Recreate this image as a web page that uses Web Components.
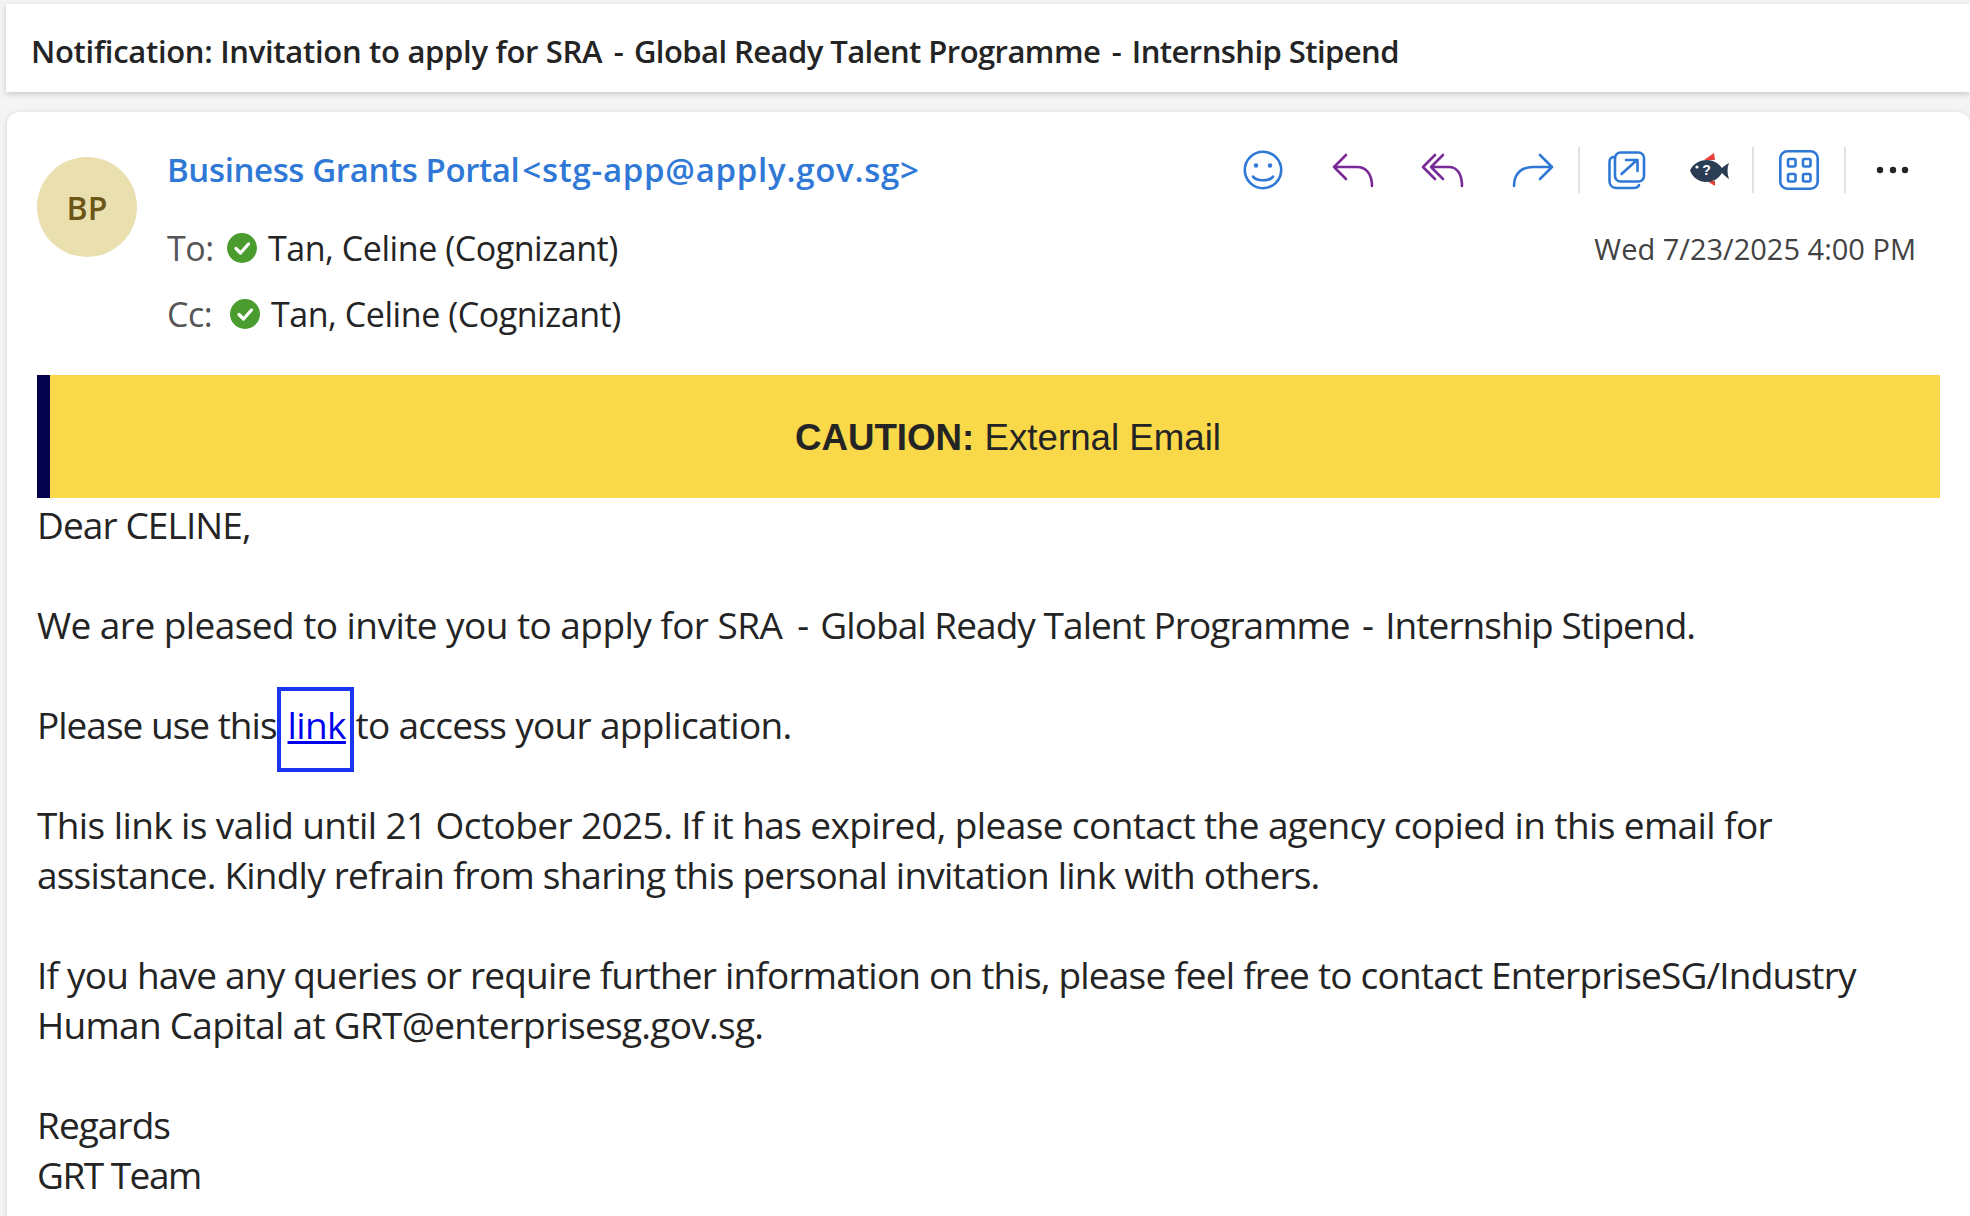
<!DOCTYPE html>
<html>
<head>
<meta charset="utf-8">
<title>Mail</title>
<style>
html, body { margin: 0; padding: 0; height: 100%; background: #f4f4f4; overflow: hidden; }
body { font-family: "Open Sans", "Noto Sans", sans-serif; color: #242424; }
/* Open Sans runs wider than the original face, so lines get their own tracking */
.dash { letter-spacing: .8px; padding-left: 2px; }
.dash-first { padding-left: 4.500px; }
.t-56 { letter-spacing: -.56px; }
.t-70 { letter-spacing: -.7px; }
.t-72 { letter-spacing: -.72px; }
.t-80 { letter-spacing: -.8px; }
.t-90 { letter-spacing: -.9px; }
.t-95 { letter-spacing: -.95px; }
.t-100 { letter-spacing: -1px; }
.t-150 { letter-spacing: -1.5px; }
.sub-dash { letter-spacing: 1px; padding-left: 2.500px; }
.sub-mid { letter-spacing: -.56px; }
</style>
</head>
<body>
<mail-page>
    <mail-subject>Notification: Invitation to apply for SRA<span class="sub-dash"> - </span><span class="sub-mid">Global Ready Talent Programme</span><span class="sub-dash"> - </span><span class="sub-mid">Internship Stipend</span></mail-subject>
    <mail-card>
        <mail-header
            slot="header"
            initials="BP"
            sender="Business Grants Portal"
            address="&lt;stg-app@apply.gov.sg&gt;"
            date="Wed 7/23/2025 4:00 PM">
            <mail-recipient label="To:" offset="60">Tan, Celine (Cognizant)</mail-recipient>
            <mail-recipient label="Cc:" offset="63">Tan, Celine (Cognizant)</mail-recipient>
        </mail-header>
        <caution-banner><b>CAUTION:</b> External Email</caution-banner>
        <mail-body>
            <p class="t-90">Dear CELINE,</p>
            <p><span class="t-56">We are pleased to invite you to apply for SRA</span><span class="dash dash-first"> - </span><span class="t-95">Global Ready Talent Programme</span><span class="dash"> - </span><span class="t-95">Internship Stipend.</span></p>
            <p><span class="t-100">Please use this</span><boxed-link>link</boxed-link><span class="t-70">to access your application.</span></p>
            <p>This link is valid until 21 October 2025. If it has expired, please contact the agency copied in this email for<br><span class="t-80">assistance. Kindly refrain from sharing this personal invitation link with others.</span></p>
            <p><span class="t-80">If you have any queries or require further information on this, please feel free to contact EnterpriseSG/Industry</span><br><span class="t-72">Human Capital at GRT@enterprisesg.gov.sg.</span></p>
            <p><span class="t-95">Regards</span><br><span class="t-150">GRT Team</span></p>
        </mail-body>
    </mail-card>
</mail-page>

<script>
const ICONS = {
    smile: `<svg width="40" height="40" viewBox="0 0 40 40" fill="none" stroke="#2f78d6" stroke-width="2.6" stroke-linecap="round">
        <circle cx="20" cy="20" r="18.2"/>
        <circle cx="13" cy="15.5" r="2.2" fill="#2f78d6" stroke="none"/>
        <circle cx="27" cy="15.5" r="2.2" fill="#2f78d6" stroke="none"/>
        <path d="M10 26.500C13 31.500 27 31.500 30 26.500"/></svg>`,
    reply: `<svg width="44" height="40" viewBox="0 0 44 40" fill="none" stroke="#7a2a96" stroke-width="2.600" stroke-linecap="round" stroke-linejoin="round">
        <path d="M15 5L3 17L15 29M3 17H26C35 17 41 24 41 36"/></svg>`,
    replyAll: `<svg width="44" height="40" viewBox="0 0 44 40" fill="none" stroke="#7a2a96" stroke-width="2.600" stroke-linecap="round" stroke-linejoin="round">
        <path d="M14 5L2 17L14 29M22 5L10 17L22 29M10 17H28C36 17 41 24 41 36"/></svg>`,
    forward: `<svg width="44" height="40" viewBox="0 0 44 40" fill="none" stroke="#2f78d6" stroke-width="2.600" stroke-linecap="round" stroke-linejoin="round">
        <path d="M29 5L41 17L29 29M41 17H22C10 17 3 24 3 36"/></svg>`,
    popout: `<svg width="40" height="40" viewBox="0 0 40 40" fill="none" stroke="#2f78d6" stroke-width="2.600" stroke-linecap="round" stroke-linejoin="round">
        <rect x="8" y="2.500" width="29" height="29" rx="5.500"/>
        <path d="M8 7H7C4 7 2.500 9 2.500 12V31C2.500 35 5 38 9 38H27C30 38 32 36 32 35"/>
        <path d="M14.500 24L30 10M19 10H30.500V21"/></svg>`,
    fish: `<svg width="42" height="38" viewBox="0 0 42 38" fill="none">
        <path d="M15 9L25 2L26 9Z" fill="#e5403a"/>
        <path d="M18 30L26 35V30Z" fill="#e5403a"/>
        <path d="M1 19.500C4 12 12 9 18 9C25 9 30 13 33 17C35 15 38 13 40 12C38 17 38 22 40 28C37 26 35 24 33 22C30 27 25 31 17 31C10 31 4 27 1 19.500Z" fill="#2a3d52"/>
        <circle cx="8" cy="16" r="1.600" fill="#fff"/>
        <text x="17.500" y="24" text-anchor="middle" font-family="Liberation Sans" font-weight="700" font-size="14" fill="#fff">?</text></svg>`,
    apps: `<svg width="40" height="40" viewBox="0 0 40 40" fill="none" stroke="#2f78d6" stroke-width="2.6">
        <rect x="1.300" y="1.300" width="37.400" height="37.400" rx="7"/>
        <rect x="9" y="9" width="7.500" height="7.500" rx="1.500"/>
        <rect x="24" y="9" width="7.500" height="7.500" rx="1.500"/>
        <rect x="9" y="24" width="7.500" height="7.500" rx="1.500"/>
        <rect x="24" y="24" width="7.500" height="7.500" rx="1.500"/></svg>`,
    more: `<svg width="34" height="10" viewBox="0 0 34 10" fill="#242424">
        <circle cx="4" cy="5" r="3.200"/><circle cx="17" cy="5" r="3.200"/><circle cx="29" cy="5" r="3.200"/></svg>`
};

class MailPage extends HTMLElement {
    constructor() {
        super();
        this.shadowDOM = this.attachShadow({mode: "open"});
        this.shadowDOM.innerHTML = `
            <style>
                :host {
                    display: flex;
                    flex-direction: column;
                    gap: 20px;
                    padding: 4px 0 0 6px;
                    box-sizing: border-box;
                    height: 1216px;
                    width: 1970px;
                    overflow: hidden;
                }
            </style>
            <slot></slot>`;
    }
}

class MailSubject extends HTMLElement {
    constructor() {
        super();
        this.shadowDOM = this.attachShadow({mode: "open"});
        this.shadowDOM.innerHTML = `
            <style>
                :host {
                    display: block;
                    flex: none;
                    box-sizing: border-box;
                    height: 88px;
                    padding: 5px 0 0 25px;
                    line-height: 84px;
                    background: #fff;
                    box-shadow: 0 2px 6px rgba(0, 0, 0, .18);
                    font-size: 31px;
                    font-weight: 600;
                    letter-spacing: -.3px;
                    color: #242424;
                    white-space: nowrap;
                }
            </style>
            <slot></slot>`;
    }
}

class MailCard extends HTMLElement {
    constructor() {
        super();
        this.shadowDOM = this.attachShadow({mode: "open"});
        this.shadowDOM.innerHTML = `
            <style>
                :host {
                    display: block;
                    flex: 1;
                    min-height: 0;
                    margin-left: 1px;
                    padding: 45px 30px 0 30px;
                    background: #fff;
                    border-radius: 12px 12px 0 0;
                    box-shadow: 0 1px 5px rgba(0, 0, 0, .16);
                }
            </style>
            <slot name="header"></slot>
            <slot></slot>`;
    }
}

class MailHeader extends HTMLElement {
    constructor() {
        super();
        this.shadowDOM = this.attachShadow({mode: "open"});
        const buttons = [
            ["smile", 90], ["reply", 90], ["replyAll", 90], ["forward", 90], ["sep"],
            ["popout", 94], ["fish", 72, 6], ["sep"],
            ["apps", 90], ["sep"],
            ["more", 94]
        ].map(([name, width, after]) => name === "sep"
            ? `<i class="sep"></i>`
            : `<span class="btn" style="width:${width}px;margin-right:${after || 0}px">${ICONS[name]}</span>`).join("");
        this.shadowDOM.innerHTML = `
            <style>
                :host {
                    display: grid;
                    grid-template-columns: 130px 1fr auto;
                    height: 218px;
                }
                .avatar {
                    width: 100px;
                    height: 100px;
                    border-radius: 50%;
                    background: #eadfae;
                    color: #6b5618;
                    font-size: 32px;
                    font-weight: 600;
                    display: flex;
                    align-items: center;
                    justify-content: center;
                }
                .from {
                    font-size: 33px;
                    line-height: 50px;
                    margin-top: -12px;
                    color: #2f78d6;
                    font-weight: 550;
                    letter-spacing: -.38px;
                    white-space: nowrap;
                }
                .addr { margin-left: 3px; letter-spacing: .73px; }
                .people { display: flex; flex-direction: column; gap: 16px; margin-top: 28px; }
                .side { display: flex; flex-direction: column; align-items: flex-end; }
                .bar { display: flex; align-items: center; height: 46px; margin-top: -10px; }
                .btn { display: flex; align-items: center; justify-content: center; height: 46px; }
                .sep { display: block; width: 2px; height: 46px; background: #e0e0e0; }
                .date { font-size: 29px; line-height: 40px; margin-top: 36px; color: #424242; margin-right: 24px; white-space: nowrap; }
            </style>
            <div class="avatar">${this.getAttribute("initials")}</div>
            <div>
                <div class="from">${this.getAttribute("sender")}<span class="addr">${this.getAttribute("address").replace("<", "&lt;")}</span></div>
                <div class="people"><slot></slot></div>
            </div>
            <div class="side">
                <div class="bar">${buttons}</div>
                <div class="date">${this.getAttribute("date")}</div>
            </div>`;
    }
}

class MailRecipient extends HTMLElement {
    constructor() {
        super();
        this.shadowDOM = this.attachShadow({mode: "open"});
        this.shadowDOM.innerHTML = `
            <style>
                :host {
                    display: flex;
                    align-items: center;
                    height: 50px;
                    font-size: 34px;
                    letter-spacing: -.45px;
                    color: #242424;
                    white-space: nowrap;
                }
                .label { color: #555; width: ${this.getAttribute("offset")}px; }
                svg { margin-right: 11px; flex: none; }
            </style>
            <span class="label">${this.getAttribute("label")}</span>
            <svg width="30" height="30" viewBox="0 0 30 30">
                <circle cx="15" cy="15" r="15" fill="#4a9c2f"/>
                <path d="M9 15.500L13.500 20L21.500 11" fill="none" stroke="#fff" stroke-width="3.200" stroke-linecap="round" stroke-linejoin="round"/>
            </svg>
            <slot></slot>`;
    }
}

class CautionBanner extends HTMLElement {
    constructor() {
        super();
        this.shadowDOM = this.attachShadow({mode: "open"});
        this.shadowDOM.innerHTML = `
            <style>
                :host {
                    display: flex;
                    align-items: center;
                    justify-content: center;
                    height: 123px;
                    padding: 2px 0 0 26px;
                    background: #f9d84a;
                    border-left: 13px solid #03034d;
                    box-sizing: border-box;
                    font-family: "Liberation Sans", Arial, sans-serif;
                    font-size: 36.700px;
                    color: #242424;
                }
            </style>
            <div><slot></slot></div>`;
    }
}

class MailBody extends HTMLElement {
    constructor() {
        super();
        this.shadowDOM = this.attachShadow({mode: "open"});
        this.shadowDOM.innerHTML = `
            <style>
                :host {
                    display: flow-root;
                    margin-top: 2px;
                    font-size: 37px;
                    letter-spacing: -.6px;
                    line-height: 50px;
                    color: #242424;
                }
                ::slotted(p) { margin: 0 0 50px 0; white-space: nowrap; }
            </style>
            <slot></slot>`;
    }
}

class BoxedLink extends HTMLElement {
    constructor() {
        super();
        this.shadowDOM = this.attachShadow({mode: "open"});
        this.shadowDOM.innerHTML = `
            <style>
                :host {
                    display: inline-block;
                    box-sizing: border-box;
                    height: 85px;
                    margin: -13px 1.500px -22px 0;
                    padding: 9px 4px 0 7px;
                    border: 4px solid #1a35f0;
                    line-height: 50px;
                    vertical-align: top;
                }
                a { color: #0000ee; text-decoration: underline; text-decoration-thickness: 3px; }
            </style>
            <a href="#"><slot></slot></a>`;
    }
}

customElements.define("mail-page", MailPage);
customElements.define("mail-subject", MailSubject);
customElements.define("mail-card", MailCard);
customElements.define("mail-header", MailHeader);
customElements.define("mail-recipient", MailRecipient);
customElements.define("caution-banner", CautionBanner);
customElements.define("mail-body", MailBody);
customElements.define("boxed-link", BoxedLink);
</script>
</body>
</html>
